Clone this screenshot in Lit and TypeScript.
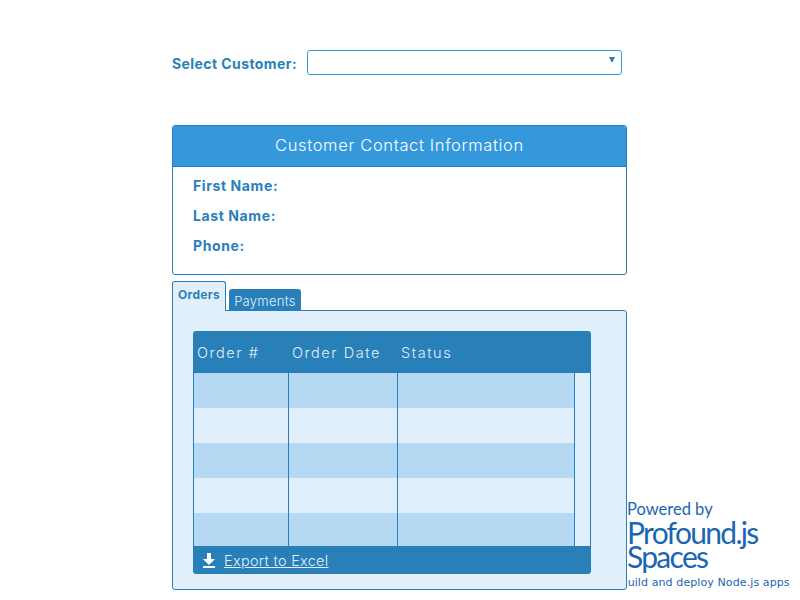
import { LitElement, html, css } from 'lit';
import { customElement } from 'lit/decorators.js';

const ROW_HEIGHTS = [35, 35, 35, 35, 33];

@customElement('app-root')
export class AppRoot extends LitElement {
  static styles = css`
    :host {
      display: block;
      position: relative;
      width: 800px;
      height: 600px;
      overflow: hidden;
      background: #fff;
      font-family: 'Inter', 'Open Sans', sans-serif;
      color: #2980b9;
    }
    .page {
      position: relative;
      z-index: 1;
      display: flex;
      flex-direction: column;
      width: 455px;
      margin-left: 172px;
      padding-top: 50px;
    }
    .picker {
      display: flex;
      align-items: center;
      height: 25px;
      gap: 10px;
    }
    .label {
      font-weight: 700;
      font-size: 14px;
      letter-spacing: 0.42px;
      white-space: nowrap;
    }
    .picker .label { width: 125px; position: relative; top: 1px; }
    .select {
      box-sizing: border-box;
      width: 315px;
      height: 25px;
      border: 1px solid #3498db;
      border-radius: 3px;
      display: flex;
      justify-content: flex-end;
      padding: 6px 6px 0 0;
    }
    .select svg { display: block; }
    .card {
      box-sizing: border-box;
      margin-top: 50px;
      height: 150px;
      border: 1px solid #2980b9;
      border-radius: 3px;
      overflow: hidden;
    }
    .card-head {
      box-sizing: border-box;
      height: 41px;
      background: #3498db;
      border-bottom: 1px solid #2980b9;
      color: #fff;
      font-size: 16.5px;
      font-weight: 300;
      letter-spacing: 0.65px;
      text-align: center;
      line-height: 38px;
    }
    .fields {
      display: flex;
      flex-direction: column;
      padding: 4px 20px;
    }
    .fields .label { height: 30px; line-height: 30px; letter-spacing: 0.6px; }
    .tabs {
      display: flex;
      align-items: flex-end;
      gap: 3px;
      margin-top: 6px;
      height: 30px;
      position: relative;
      z-index: 1;
    }
    .tab {
      box-sizing: border-box;
      border-radius: 3px 3px 0 0;
      text-align: center;
      white-space: nowrap;
    }
    .tab.active {
      width: 54px;
      height: 30px;
      background: #e1effb;
      border: 1px solid #2980b9;
      border-bottom: none;
      font-weight: 700;
      font-size: 12px;
      letter-spacing: 0.3px;
      line-height: 26px;
    }
    .tab.idle {
      width: 72px;
      height: 22px;
      background: #2980b9;
      color: #e1effb;
      font-size: 13px;
      font-weight: 300;
      letter-spacing: 0.3px;
      line-height: 25px;
    }
    .panel {
      box-sizing: border-box;
      margin-top: -1px;
      height: 280px;
      padding: 20px 35px 0 20px;
      background: #e1effb;
      border: 1px solid #2980b9;
      border-radius: 0 3px 3px 3px;
    }
    .grid {
      width: 398px;
      height: 243px;
      border-radius: 3px;
      overflow: hidden;
      display: flex;
      flex-direction: column;
    }
    .grid-head {
      display: grid;
      grid-template-columns: 95px 109px 1fr;
      height: 42px;
      flex: none;
      background: #2980b9;
      color: #e1effb;
      font-size: 14.5px;
      font-weight: 300;
      letter-spacing: 1.55px;
      line-height: 43px;
      padding-left: 4px;
      box-sizing: border-box;
    }
    .grid-body {
      flex: 1;
      display: flex;
      box-sizing: border-box;
      border-left: 1px solid #2980b9;
      border-right: 1px solid #2980b9;
    }
    .rows { width: 381px; border-right: 1px solid #2980b9; flex: none; box-sizing: border-box; }
    .row { display: grid; grid-template-columns: 95px 109px 1fr; }
    .row.odd { background: #b5d9f2; }
    .cell { border-right: 1px solid #2980b9; box-sizing: border-box; }
    .cell:last-child { border-right: none; }
    .grid-foot {
      flex: none;
      display: flex;
      align-items: center;
      gap: 8px;
      height: 28px;
      background: #2980b9;
      color: #e1effb;
      padding-left: 9px;
      font-size: 14.5px;
      font-weight: 300;
      letter-spacing: 0.28px;
      box-sizing: border-box;
    }
    .grid-foot a { color: inherit; text-decoration: underline; }
    .brand {
      position: absolute;
      left: 627px;
      top: 500px;
      color: #1b66b0;
      white-space: nowrap;
    }
    .brand div { font-family: 'Lato', sans-serif; }
    .powered { font-size: 16.5px; line-height: 18px; }
    .name { font-size: 30px; line-height: 24px; letter-spacing: -1.7px; }
    .name:nth-child(2) { margin-top: 2px; }
    .brand .tagline {
      position: absolute;
      left: -7px;
      top: 76px;
      font-family: 'DejaVu Sans', sans-serif;
      font-size: 11px;
      letter-spacing: 0.1px;
      line-height: 14px;
    }
  `;

  render() {
    return html`
      <div class="page">
        <div class="picker">
          <span class="label">Select Customer:</span>
          <div class="select">
            <svg width="6" height="6" viewBox="0 0 6 6"><path d="M0 0h6L3 6z" fill="#2980b9"></path></svg>
          </div>
        </div>
        <section class="card">
          <div class="card-head">Customer Contact Information</div>
          <div class="fields">
            <span class="label">First Name:</span>
            <span class="label">Last Name:</span>
            <span class="label">Phone:</span>
          </div>
        </section>
        <div class="tabs">
          <div class="tab active">Orders</div>
          <div class="tab idle">Payments</div>
        </div>
        <div class="panel">
          <div class="grid">
            <div class="grid-head">
              <span>Order #</span><span>Order Date</span><span>Status</span>
            </div>
            <div class="grid-body">
              <div class="rows">
                ${ROW_HEIGHTS.map((h, i) => html`
                  <div class="row ${i % 2 === 0 ? 'odd' : ''}" style="height:${h}px">
                    <div class="cell"></div><div class="cell"></div><div class="cell"></div>
                  </div>
                `)}
              </div>
            </div>
            <div class="grid-foot">
              <svg width="14" height="15" viewBox="0 0 14 15">
                <path d="M5 0h4v6h4L7 12 1 6h4zM1 13h12v2H1z" fill="#fff"></path>
              </svg>
              <a>Export to Excel</a>
            </div>
          </div>
        </div>
      </div>
      <div class="brand">
        <div class="powered">Powered by</div>
        <div class="name">Profound.js</div>
        <div class="name">Spaces</div>
        <div class="tagline">Build and deploy Node.js apps</div>
      </div>
    `;
  }
}
